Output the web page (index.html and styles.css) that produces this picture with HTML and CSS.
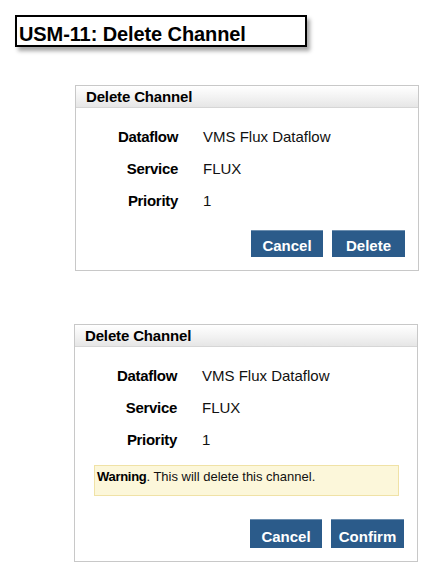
FILE: index.html
```html
<!DOCTYPE html>
<html>
<head>
<meta charset="utf-8">
<link rel="stylesheet" href="styles.css">
</head>
<body>
  <h1 class="title">USM-11: Delete Channel</h1>

  <section class="dialog dialog-first">
    <header class="dialog-head">Delete Channel</header>
    <div class="dialog-body">
      <dl class="fields">
        <dt>Dataflow</dt><dd>VMS Flux Dataflow</dd>
        <dt>Service</dt><dd>FLUX</dd>
        <dt>Priority</dt><dd>1</dd>
      </dl>
      <div class="actions">
        <button class="btn">Cancel</button>
        <button class="btn">Delete</button>
      </div>
    </div>
  </section>

  <section class="dialog dialog-second">
    <header class="dialog-head">Delete Channel</header>
    <div class="dialog-body">
      <dl class="fields">
        <dt>Dataflow</dt><dd>VMS Flux Dataflow</dd>
        <dt>Service</dt><dd>FLUX</dd>
        <dt>Priority</dt><dd>1</dd>
      </dl>
      <div class="warning"><b>Warning</b>. This will delete this channel.</div>
      <div class="actions actions-confirm">
        <button class="btn">Cancel</button>
        <button class="btn">Confirm</button>
      </div>
    </div>
  </section>
</body>
</html>
```

FILE: styles.css
```css
html, body {
  margin: 0;
  padding: 0;
  background: #ffffff;
}

body {
  font-family: "Liberation Sans", Arial, sans-serif;
  color: #111;
  padding: 15px 0 0 0;
}

.title {
  box-sizing: border-box;
  margin: 0 0 0 15px;
  width: 292px;
  height: 32px;
  border: 2px solid #000;
  padding: 0 0 0 2px;
  font-size: 20px;
  font-weight: bold;
  line-height: 30px;
  padding-top: 2px;
  letter-spacing: -0.1px;
  box-shadow: 3px 4px 4px rgba(0, 0, 0, 0.35);
  color: #000;
}

.dialog {
  box-sizing: border-box;
  width: 344px;
  margin-left: 75px;
  border: 1px solid #c8c8c8;
  background: #fff;
}

.dialog-first {
  margin-top: 38px;
  height: 186px;
}

.dialog-second {
  margin-top: 53px;
  margin-left: 74px;
  height: 238px;
}

.dialog-head {
  height: 21px;
  line-height: 21px;
  padding-left: 10px;
  font-size: 15px;
  font-weight: bold;
  letter-spacing: -0.15px;
  color: #000;
  background: linear-gradient(to bottom, #ffffff 0%, #f2f2f2 55%, #e6e6e6 100%);
  border-bottom: 1px solid #d6d6d6;
}

.dialog-body {
  padding: 13px 13px 0 0;
}

.fields {
  display: grid;
  grid-template-columns: 102px 1fr;
  column-gap: 25px;
  margin: 0;
  font-size: 15px;
  line-height: 32px;
}

.fields dt {
  font-weight: bold;
  text-align: right;
  letter-spacing: -0.3px;
  color: #000;
}

.fields dd {
  margin: 0;
  color: #111;
}

.warning {
  margin: 9px 5px 0 19px;
  border: 1px solid #f0e2a6;
  background: #fcf7da;
  font-size: 13px;
  line-height: 15px;
  padding: 3px 2px 11px 2px;
  color: #111;
}

.warning b {
  letter-spacing: -0.3px;
  color: #000;
}

.actions {
  display: flex;
  justify-content: flex-end;
  gap: 9px;
  margin-top: 13px;
}

.actions-confirm {
  margin-top: 23px;
}

.btn {
  box-sizing: border-box;
  width: 72px;
  height: 27px;
  padding: 4px 0 0 0;
  margin: 0;
  border: none;
  border-top: 1px solid #6d8fb0;
  background: #2b5b8a;
  color: #fff;
  font-family: "Liberation Sans", Arial, sans-serif;
  font-size: 15px;
  font-weight: bold;
  line-height: 22px;
  text-align: center;
}

.btn + .btn {
  width: 73px;
}

.actions-confirm .btn {
  height: 29px;
  padding-top: 5px;
}
```
